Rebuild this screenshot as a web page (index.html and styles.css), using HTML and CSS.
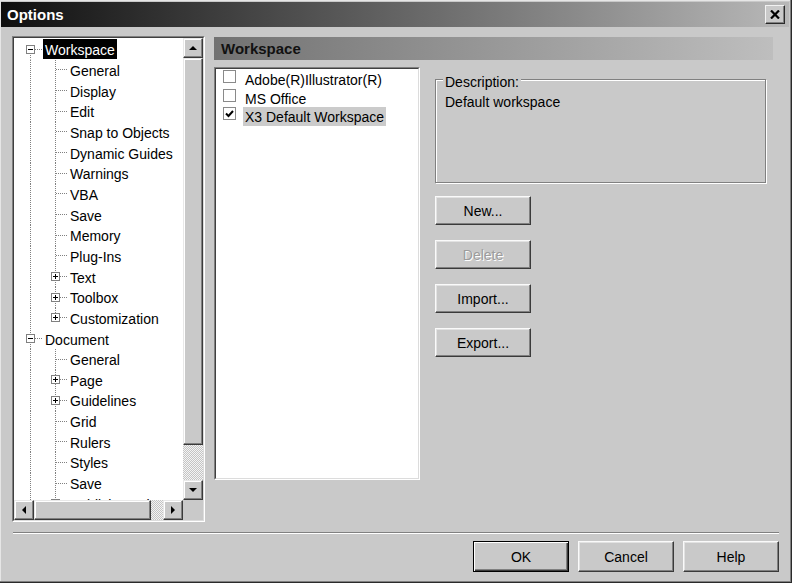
FILE: index.html
```html
<!DOCTYPE html>
<html>
<head>
<meta charset="utf-8">
<title>Options</title>
<link rel="stylesheet" href="styles.css">
</head>
<body>
<div class="window">
  <div class="titlebar">
    <span class="title">Options</span>
    <div class="close"><svg width="10" height="9" viewBox="0 0 10 9"><path d="M1 0.5 L9 8.5 M9 0.5 L1 8.5" stroke="#000" stroke-width="2.2"/></svg></div>
  </div>
  <div class="main">
    <div class="sunken tree-frame">
      <div class="sunken-in tree-grid">
        <div class="tree-view">
          <div class="row"><span class="c rf"><i class="bx minus"></i></span><span class="lbl sel">Workspace</span></div>
          <div class="row"><span class="c v"></span><span class="c t"></span><span class="lbl">General</span></div>
          <div class="row"><span class="c v"></span><span class="c t"></span><span class="lbl">Display</span></div>
          <div class="row"><span class="c v"></span><span class="c t"></span><span class="lbl">Edit</span></div>
          <div class="row"><span class="c v"></span><span class="c t"></span><span class="lbl">Snap to Objects</span></div>
          <div class="row"><span class="c v"></span><span class="c t"></span><span class="lbl">Dynamic Guides</span></div>
          <div class="row"><span class="c v"></span><span class="c t"></span><span class="lbl">Warnings</span></div>
          <div class="row"><span class="c v"></span><span class="c t"></span><span class="lbl">VBA</span></div>
          <div class="row"><span class="c v"></span><span class="c t"></span><span class="lbl">Save</span></div>
          <div class="row"><span class="c v"></span><span class="c t"></span><span class="lbl">Memory</span></div>
          <div class="row"><span class="c v"></span><span class="c t"></span><span class="lbl">Plug-Ins</span></div>
          <div class="row"><span class="c v"></span><span class="c t"><i class="bx plus"></i></span><span class="lbl">Text</span></div>
          <div class="row"><span class="c v"></span><span class="c t"><i class="bx plus"></i></span><span class="lbl">Toolbox</span></div>
          <div class="row"><span class="c v"></span><span class="c e"><i class="bx plus"></i></span><span class="lbl">Customization</span></div>
          <div class="row"><span class="c rm"><i class="bx minus"></i></span><span class="lbl">Document</span></div>
          <div class="row"><span class="c v"></span><span class="c t"></span><span class="lbl">General</span></div>
          <div class="row"><span class="c v"></span><span class="c t"><i class="bx plus"></i></span><span class="lbl">Page</span></div>
          <div class="row"><span class="c v"></span><span class="c t"><i class="bx plus"></i></span><span class="lbl">Guidelines</span></div>
          <div class="row"><span class="c v"></span><span class="c t"></span><span class="lbl">Grid</span></div>
          <div class="row"><span class="c v"></span><span class="c t"></span><span class="lbl">Rulers</span></div>
          <div class="row"><span class="c v"></span><span class="c t"></span><span class="lbl">Styles</span></div>
          <div class="row"><span class="c v"></span><span class="c t"></span><span class="lbl">Save</span></div>
          <div class="row"><span class="c v"></span><span class="c t"><i class="bx plus"></i></span><span class="lbl">Publish To The Web</span></div>
        </div>
        <div class="vscroll">
          <div class="sbtn"><svg width="8" height="4" viewBox="0 0 8 4"><polygon points="0,4 4,0 8,4" fill="#000"/></svg></div>
          <div class="raised vthumb"></div>
          <div class="track"></div>
          <div class="sbtn"><svg width="8" height="4" viewBox="0 0 8 4"><polygon points="0,0 8,0 4,4" fill="#000"/></svg></div>
        </div>
        <div class="hscroll">
          <div class="sbtn"><svg width="4" height="8" viewBox="0 0 4 8"><polygon points="4,0 4,8 0,4" fill="#000"/></svg></div>
          <div class="raised hthumb"></div>
          <div class="track"></div>
          <div class="sbtn"><svg width="4" height="8" viewBox="0 0 4 8"><polygon points="0,0 0,8 4,4" fill="#000"/></svg></div>
        </div>
        <div class="corner"></div>
      </div>
    </div>
    <div class="page">
      <div class="page-head">Workspace</div>
      <div class="page-body">
        <div class="sunken list-frame">
          <div class="sunken-in list">
            <div class="item"><span class="chk"></span><span class="item-lbl">Adobe(R)Illustrator(R)</span></div>
            <div class="item"><span class="chk"></span><span class="item-lbl">MS Office</span></div>
            <div class="item"><span class="chk"><svg width="9" height="8" viewBox="0 0 9 8"><polyline points="1,3.5 3.5,6 8,1" fill="none" stroke="#000" stroke-width="2"/></svg></span><span class="item-lbl item-sel">X3 Default Workspace</span></div>
          </div>
        </div>
        <div class="side">
          <div class="group">
            <span class="group-label">Description:</span>
            <div class="group-text">Default workspace</div>
          </div>
          <div class="side-buttons">
            <div class="btn">New...</div>
            <div class="btn disabled">Delete</div>
            <div class="btn">Import...</div>
            <div class="btn">Export...</div>
          </div>
        </div>
      </div>
    </div>
  </div>
  <div class="separator"></div>
  <div class="footer">
    <div class="btn big default">OK</div>
    <div class="btn big">Cancel</div>
    <div class="btn big">Help</div>
  </div>
</div>
</body>
</html>
```
FILE: styles.css
```css
:root {
  --bg: #c9c9c9;
  --dv: repeating-linear-gradient(180deg, #808080 0 1px, transparent 1px 2px);
  --dh: repeating-linear-gradient(90deg, #808080 0 1px, transparent 1px 2px);
}
* { box-sizing: border-box; }
html, body { margin: 0; padding: 0; }
body {
  width: 792px;
  height: 583px;
  overflow: hidden;
  background: var(--bg);
  font-family: "Liberation Sans", Arial, sans-serif;
  font-size: 14px;
  color: #000;
}
.window {
  width: 792px;
  height: 583px;
  padding: 2px 3px 3px 1px;
  display: flex;
  flex-direction: column;
  box-shadow: inset -1px -1px 0 #2a2a2a, inset -2px -2px 0 #808080, inset 1px 1px 0 #e6e6e6;
}
.titlebar {
  height: 25px;
  flex: none;
  display: flex;
  align-items: center;
  justify-content: space-between;
  padding: 0 4px 0 6px;
  background: linear-gradient(90deg, #0f0f0f, #b8b8b8);
}
.title { color: #fff; font-weight: bold; font-size: 15px; }
.close {
  width: 20px;
  height: 19px;
  background: var(--bg);
  border: 1px solid;
  border-color: #f2f2f2 #2a2a2a #2a2a2a #f2f2f2;
  box-shadow: inset -1px -1px 0 #808080;
  display: flex;
  align-items: center;
  justify-content: center;
}
.main {
  flex: none;
  height: 495px;
  display: flex;
  gap: 9px;
  padding: 9px 0 0 11px;
}
.sunken { border: 1px solid; border-color: #808080 #fff #fff #808080; }
.sunken-in { height: 100%; border: 1px solid; border-color: #404040 #dcdcdc #dcdcdc #404040; }
.raised {
  background: var(--bg);
  border: 1px solid;
  border-color: #e8e8e8 #3a3a3a #3a3a3a #e8e8e8;
  box-shadow: inset -1px -1px 0 #808080, inset 1px 1px 0 #fff;
}
.tree-frame { width: 193px; height: 486px; flex: none; }
.tree-grid {
  display: grid;
  grid-template-columns: 1fr 20px;
  grid-template-rows: 1fr 20px;
}
.tree-view {
  background: #fff;
  overflow: hidden;
  min-width: 0;
  min-height: 0;
  padding: 1px 0 0 4px;
}
.row { display: flex; height: 20.67px; }
.c {
  width: 25px;
  flex: none;
  display: flex;
  align-items: center;
  justify-content: center;
}
.v { background: var(--dv) 12px 0 / 1px 100% no-repeat; }
.t { background: var(--dv) 12px 0 / 1px 100% no-repeat, var(--dh) 13px 50% / 12px 1px no-repeat; }
.e { background: var(--dv) 12px 0 / 1px 50% no-repeat, var(--dh) 13px 50% / 12px 1px no-repeat; }
.rf { background: var(--dv) 12px 100% / 1px 50% no-repeat, var(--dh) 13px 50% / 12px 1px no-repeat; }
.rm { background: var(--dv) 12px 0 / 1px 100% no-repeat, var(--dh) 13px 50% / 12px 1px no-repeat; }
.bx {
  width: 9px;
  height: 9px;
  border: 1px solid #808080;
  display: block;
}
.minus { background: linear-gradient(#000, #000) center / 5px 1px no-repeat, #fff; }
.plus { background: linear-gradient(#000, #000) center / 5px 1px no-repeat, linear-gradient(#000, #000) center / 1px 5px no-repeat, #fff; }
.lbl {
  align-self: center;
  height: 20px;
  line-height: 22px;
  padding: 0 2px;
  white-space: nowrap;
}
.sel { background: #000; color: #fff; }
.vscroll { display: flex; flex-direction: column; }
.hscroll { display: flex; }
.sbtn {
  width: 20px;
  height: 20px;
  flex: none;
  display: flex;
  align-items: center;
  justify-content: center;
  background: var(--bg);
  border: 1px solid;
  border-color: #e8e8e8 #3a3a3a #3a3a3a #e8e8e8;
  box-shadow: inset -1px -1px 0 #808080, inset 1px 1px 0 #fff;
}
.vthumb { height: 387px; flex: none; }
.hthumb { width: 117px; flex: none; }
.track {
  flex: 1;
  background: repeating-conic-gradient(#c4c4c4 0 25%, #f4f4f4 0 50%) 0 0 / 2px 2px;
}
.corner { background: var(--bg); }
.page {
  width: 559px;
  flex: none;
  padding-top: 1px;
  display: flex;
  flex-direction: column;
}
.page-head {
  height: 23px;
  line-height: 24px;
  padding-left: 7px;
  font-weight: bold;
  font-size: 15px;
  color: #111;
  background: linear-gradient(90deg, #727272, #bebebe);
}
.page-body { display: flex; margin-top: 7px; }
.list-frame { width: 206px; height: 413px; flex: none; }
.list { background: #fff; padding: 1px 0 0 7px; }
.item { height: 18.5px; display: flex; align-items: flex-start; }
.chk {
  width: 13px;
  height: 13px;
  flex: none;
  border: 1px solid #8a8a8a;
  background: #fff;
  display: flex;
  align-items: center;
  justify-content: center;
}
.item-lbl {
  margin-left: 7px;
  padding: 0 2px;
  height: 18.5px;
  line-height: 21px;
  white-space: nowrap;
}
.item-sel { background: #cbcbcb; }
.side {
  margin-left: 15px;
  padding-top: 12px;
  display: flex;
  flex-direction: column;
}
.group {
  position: relative;
  width: 331px;
  height: 104px;
  border: 1px solid #808080;
  box-shadow: inset 1px 1px 0 #fff, 1px 1px 0 #fff;
  padding: 14px 0 0 9px;
  line-height: 16px;
}
.group-label {
  position: absolute;
  top: -6px;
  left: 7px;
  padding: 0 2px;
  background: var(--bg);
  line-height: 16px;
}
.side-buttons {
  display: flex;
  flex-direction: column;
  gap: 15px;
  margin-top: 13px;
}
.btn {
  width: 96px;
  height: 29px;
  display: flex;
  align-items: center;
  justify-content: center;
  background: var(--bg);
  border: 1px solid;
  border-color: #fafafa #3a3a3a #3a3a3a #fafafa;
  box-shadow: inset -1px -1px 0 #808080, inset 1px 1px 0 #e2e2e2;
}
.btn.big { height: 31px; }
.btn.default {
  border-color: #000;
  box-shadow: inset 1px 1px 0 #fff, inset -1px -1px 0 #3a3a3a, inset -2px -2px 0 #808080;
}
.disabled { color: #9c9c9c; text-shadow: 1px 1px 0 #fff; }
.separator {
  flex: none;
  height: 2px;
  margin: 10px 10px 0 12px;
  border-top: 1px solid #808080;
  border-bottom: 1px solid #fff;
}
.footer {
  display: flex;
  justify-content: flex-end;
  gap: 9px;
  margin-top: 7px;
  padding-right: 10px;
}
```
